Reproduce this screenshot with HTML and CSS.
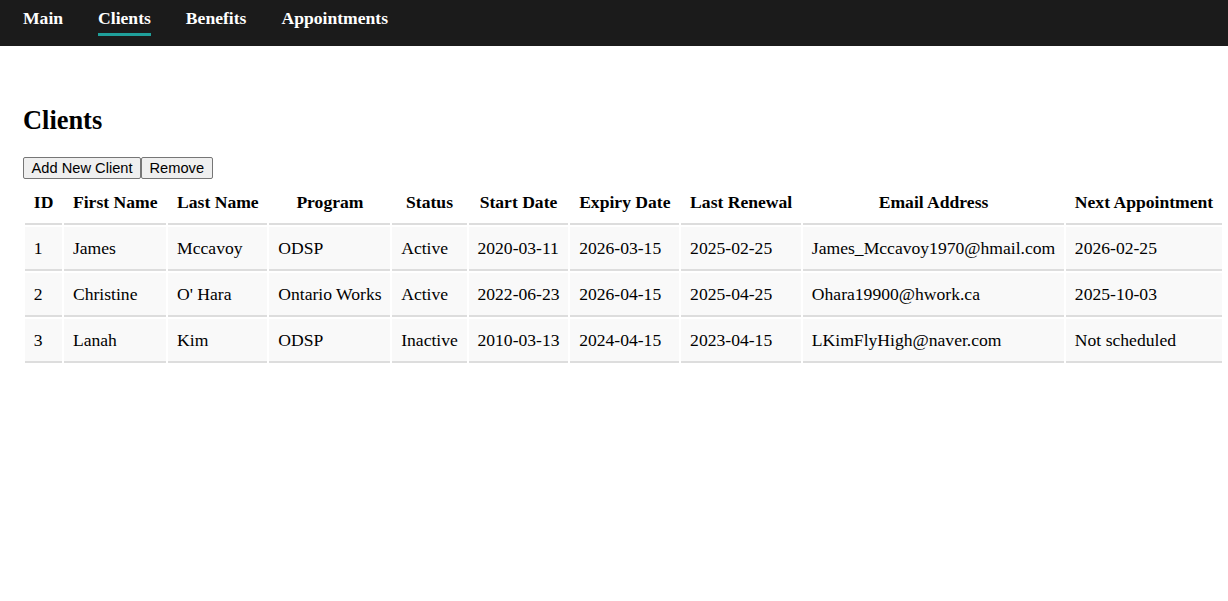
FILE: index.html
```html
<!DOCTYPE html>
<html lang="en">
<head>
<meta charset="utf-8">
<title>Clients</title>
<link rel="stylesheet" href="styles.css">
</head>
<body>
<nav class="topnav">
  <a class="nav-link" href="#">Main</a>
  <a class="nav-link active" href="#">Clients</a>
  <a class="nav-link" href="#">Benefits</a>
  <a class="nav-link" href="#">Appointments</a>
</nav>
<main class="content">
  <h2 class="page-title">Clients</h2>
  <div class="actions">
    <button class="btn" type="button">Add New Client</button><button class="btn" type="button">Remove</button>
  </div>
  <table class="clients">
    <thead>
      <tr>
        <th>ID</th><th>First Name</th><th>Last Name</th><th>Program</th><th>Status</th><th>Start Date</th><th>Expiry Date</th><th>Last Renewal</th><th>Email Address</th><th>Next Appointment</th>
      </tr>
    </thead>
    <tbody>
      <tr>
        <td>1</td><td>James</td><td>Mccavoy</td><td>ODSP</td><td>Active</td><td>2020-03-11</td><td>2026-03-15</td><td>2025-02-25</td><td>James_Mccavoy1970@hmail.com</td><td>2026-02-25</td>
      </tr>
      <tr>
        <td>2</td><td>Christine</td><td>O' Hara</td><td>Ontario Works</td><td>Active</td><td>2022-06-23</td><td>2026-04-15</td><td>2025-04-25</td><td>Ohara19900@hwork.ca</td><td>2025-10-03</td>
      </tr>
      <tr>
        <td>3</td><td>Lanah</td><td>Kim</td><td>ODSP</td><td>Inactive</td><td>2010-03-13</td><td>2024-04-15</td><td>2023-04-15</td><td>LKimFlyHigh@naver.com</td><td>Not scheduled</td>
      </tr>
    </tbody>
  </table>
</main>
</body>
</html>
```
FILE: styles.css
```css
html, body {
  margin: 0;
  padding: 0;
}
body {
  font-family: "Liberation Serif", "Times New Roman", serif;
  font-size: 17.6px;
  color: #000;
  background: #fff;
}
.topnav {
  display: flex;
  gap: 35px;
  background: #1b1b1b;
  padding: 8px 23px 10px;
  height: 46px;
  box-sizing: border-box;
}
.nav-link {
  color: #fff;
  font-weight: bold;
  text-decoration: none;
  line-height: 20px;
  padding-bottom: 5px;
  border-bottom: 3px solid transparent;
}
.nav-link.active {
  border-bottom-color: #1f9f9a;
}
.content {
  padding: 37px 0 0 23px;
}
.page-title {
  font-size: 26.4px;
  margin: 22px 0;
  line-height: 30px;
}
.actions {
  display: flex;
}
.btn {
  font-family: "Liberation Sans", Arial, sans-serif;
  font-size: 14.67px;
  padding: 1px 7.5px;
  border: 1px solid #767676;
  border-radius: 2px;
  background: #efefef;
  color: #000;
  line-height: 18px;
}
.clients {
  border-spacing: 2px;
  white-space: nowrap;
  margin-left: 0;
}
.clients th,
.clients td {
  padding: 11px 8.8px;
  line-height: 20px;
  border-bottom: 2px solid #dddddd;
}
.clients th {
  text-align: center;
  font-weight: bold;
}
.clients td {
  text-align: left;
  background: #f9f9f9;
}
```
